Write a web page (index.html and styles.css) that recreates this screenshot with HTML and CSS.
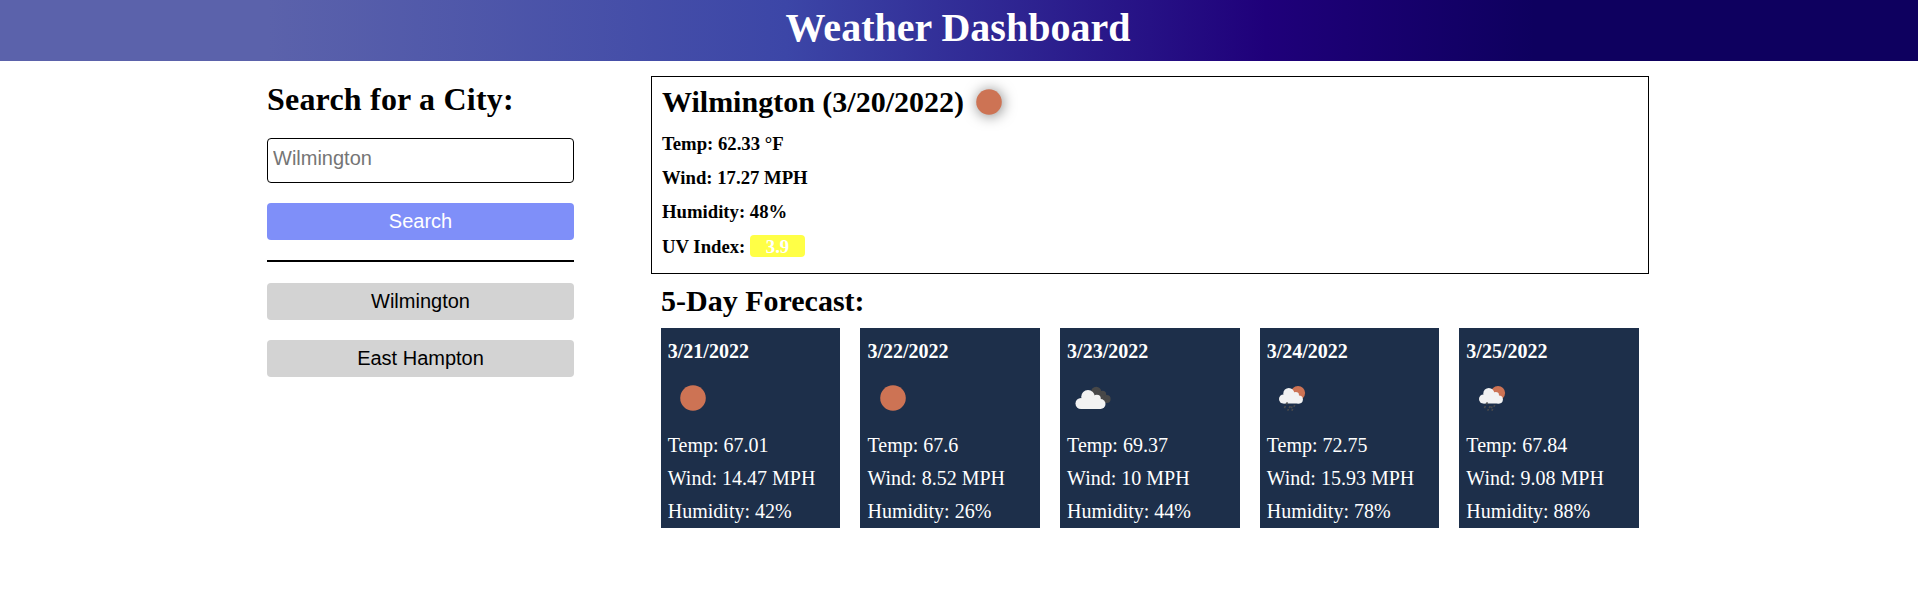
FILE: index.html
```
<!DOCTYPE html>
<html lang="en">
<head>
<meta charset="utf-8">
<title>Weather Dashboard</title>
<link rel="stylesheet" href="styles.css">
</head>
<body>
<svg class="defs" aria-hidden="true">
  <symbol id="sun" viewBox="0 0 50 50"><circle cx="25" cy="25" r="12.8" fill="#cd7354"/></symbol>
  <symbol id="clouds" viewBox="0 0 50 50">
    <g fill="#484848"><circle cx="28.2" cy="19" r="5.2"/><circle cx="34.5" cy="21.5" r="3.7"/><circle cx="38.6" cy="26" r="4"/><path d="M25 20h10l4 10H28z"/></g>
    <g fill="#f2f2f2"><circle cx="13" cy="30.5" r="5.5"/><circle cx="20" cy="23.8" r="6.8"/><circle cx="28.8" cy="25.8" r="4"/><circle cx="32.5" cy="31" r="5"/><path d="M13 27h18l2 9H13z"/></g>
  </symbol>
  <symbol id="rain" viewBox="0 0 50 50">
    <circle cx="31" cy="20" r="7.1" fill="#cd7354"/>
    <g fill="#f2f2f2"><circle cx="16.5" cy="26" r="4.5"/><circle cx="21.8" cy="20.5" r="5.5"/><circle cx="28.7" cy="22.2" r="3.3"/><circle cx="31.9" cy="26.5" r="4"/><path d="M16.5 23h14l2 7.5h-16z"/></g>
    <path d="M20.4 29.3l-1 2.2M18.4 33l-1 2.2M23.2 33l-1 2.2M27.7 32l-.8 1.8M25.1 33.5l-.8 1.8M21.5 36l-.8 1.8M25.7 36l-.8 1.8" stroke="#4b4b4b" stroke-width="1.6"/>
  </symbol>
</svg>
<header class="header"><h1 class="title">Weather Dashboard</h1></header>
<main class="layout">
  <aside class="sidebar">
    <h2 class="search-title">Search for a City:</h2>
    <input class="city-input" type="text" placeholder="Wilmington">
    <button class="btn btn-search">Search</button>
    <div class="divider"></div>
    <button class="btn">Wilmington</button>
    <button class="btn">East Hampton</button>
  </aside>
  <div class="content">
    <section class="current">
      <h2 class="current-title">Wilmington (3/20/2022)<svg class="icon icon-shadow"><use href="#sun"/></svg></h2>
      <h3 class="stat">Temp: 62.33 °F</h3>
      <h3 class="stat">Wind: 17.27 MPH</h3>
      <h3 class="stat">Humidity: 48%</h3>
      <h3 class="stat">UV Index: <span class="uv">3.9</span></h3>
    </section>
    <h2 class="forecast-title">5-Day Forecast:</h2>
    <section class="forecast">
      <article class="card"><h4 class="date">3/21/2022</h4><svg class="icon"><use href="#sun"/></svg><p class="row">Temp: 67.01</p><p class="row">Wind: 14.47 MPH</p><p class="row">Humidity: 42%</p></article>
      <article class="card"><h4 class="date">3/22/2022</h4><svg class="icon"><use href="#sun"/></svg><p class="row">Temp: 67.6</p><p class="row">Wind: 8.52 MPH</p><p class="row">Humidity: 26%</p></article>
      <article class="card"><h4 class="date">3/23/2022</h4><svg class="icon"><use href="#clouds"/></svg><p class="row">Temp: 69.37</p><p class="row">Wind: 10 MPH</p><p class="row">Humidity: 44%</p></article>
      <article class="card"><h4 class="date">3/24/2022</h4><svg class="icon"><use href="#rain"/></svg><p class="row">Temp: 72.75</p><p class="row">Wind: 15.93 MPH</p><p class="row">Humidity: 78%</p></article>
      <article class="card"><h4 class="date">3/25/2022</h4><svg class="icon"><use href="#rain"/></svg><p class="row">Temp: 67.84</p><p class="row">Wind: 9.08 MPH</p><p class="row">Humidity: 88%</p></article>
    </section>
  </div>
</main>
</body>
</html>
```
FILE: styles.css
```
* { box-sizing: border-box; margin: 0; padding: 0; }
body { font-family: "Liberation Serif", "Times New Roman", serif; background: #fff; color: #000; }
.defs { display: none; }
.header {
  height: 61px;
  background: linear-gradient(90deg, #5b62ab 0%, #5b62ab 14%, #3c46a7 41%, #1f007a 66%, #0e005f 80%, #0e005f 100%);
}
.title { padding-right: 2px; font-size: 40px; line-height: 55px; color: #fff; text-align: center; }
.layout { display: flex; width: 1382px; margin-left: 267px; gap: 77px; }
.sidebar { display: flex; flex-direction: column; width: 307px; padding-top: 20px; }
.search-title { font-size: 32px; line-height: 37px; margin-bottom: 20px; letter-spacing: .2px; }
.city-input {
  height: 45px; margin-bottom: 20px; padding: 0 5px 4px;
  border: 1px solid #000; border-radius: 4px; background: #fff;
  font: 20px "Liberation Sans", Arial, sans-serif;
}
.city-input::placeholder { color: #757575; }
.btn {
  height: 37px; margin-bottom: 20px; border: 0; border-radius: 4px;
  background: #d3d3d3; color: #000;
  font: 20px "Liberation Sans", Arial, sans-serif;
}
.btn-search { background: #7f8ff9; color: #fff; }
.divider { height: 2px; margin: 0 0 21px; background: #000; }
.content { width: 998px; padding-top: 15px; }
.current { height: 198px; padding: 0 10px; border: 1px solid #000; }
.current-title { display: flex; align-items: center; height: 50px; font-size: 30px; }
.icon { display: block; width: 50px; height: 50px; }
.icon-shadow { overflow: visible; filter: drop-shadow(1px 1px 7px rgba(0, 0, 0, .5)); }
.stat { height: 34.2px; font-size: 18.72px; line-height: 34.2px; }
.uv {
  display: inline-block; width: 55px; height: 22px; border-radius: 4px;
  background: #ffff46; color: #fff; text-align: center; line-height: 24px;
}
.forecast-title { height: 54px; padding-left: 10px; font-size: 30px; line-height: 54px; }
.forecast { display: grid; grid-template-columns: repeat(5, 1fr); gap: 20px; padding: 0 10px 0 9.8px; }
.card { height: 200px; padding: 7px 7px 0; background: #1d2f4a; color: #fff; font-size: 20px; }
.date { font-size: 20px; line-height: 33px; margin-bottom: 5px; }
.card .icon { margin: 0 0 5.5px .5px; }
.row { line-height: 33.3px; white-space: nowrap; }
```
